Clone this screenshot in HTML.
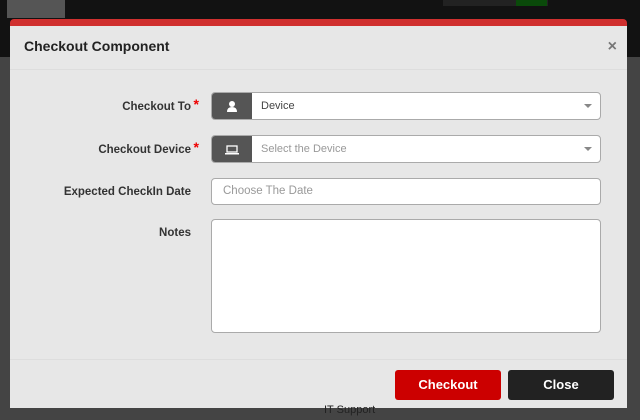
<!DOCTYPE html>
<html><head><style>
body{margin:0;width:640px;height:420px;overflow:hidden;background:#444;font-family:"Liberation Sans",sans-serif;position:relative}
.top{position:absolute;left:0;top:0;width:640px;height:57px;background:#121212}
.tb1{position:absolute;left:7px;top:0;width:58px;height:18px;background:#555}
.tb2{position:absolute;left:443px;top:0;width:105px;height:6px;background:#222}
.tb3{position:absolute;left:516px;top:0;width:31px;height:6px;background:#0a4a0a}
.modal{position:absolute;left:10px;top:19px;width:617px;height:389px;background:#e7e7e7;border-top:7px solid #d0302f;border-radius:4px 4px 0 0;box-sizing:border-box}
.hdr{height:43px;border-bottom:1px solid #ddd;position:relative}
.hdr h3{margin:0;position:absolute;left:14px;top:12px;font-size:14px;font-weight:bold;color:#222}
.x{position:absolute;right:10px;top:12px;font-size:16px;color:#777;font-weight:bold}
.lbl{position:absolute;right:436px;font-size:11.5px;font-weight:bold;color:#333;text-align:right}
.lbl i{color:#e00;font-style:normal;font-size:14px;position:absolute;right:-8px;top:-5px}
.sel{position:absolute;left:201px;width:390px;height:28px;background:#fff;border:1px solid #aaa;border-radius:4px;box-sizing:border-box;overflow:hidden}
.ic{position:absolute;left:0;top:0;width:40px;height:100%;background:#555}
.sel span{position:absolute;left:49px;top:7px;font-size:11px}
.car{position:absolute;right:8px;top:11px;border:4px solid transparent;border-top-color:#888;border-bottom:0}
.inp{position:absolute;left:201px;width:390px;background:#fff;border:1px solid #aaa;border-radius:4px;box-sizing:border-box}
.btn{position:absolute;top:344px;width:106px;height:30px;border-radius:3px;color:#fff;font-size:13px;font-weight:bold;text-align:center;line-height:30px}
</style></head><body>
<div class="top"><div class="tb1"></div><div class="tb2"></div><div class="tb3"></div></div>
<div class="modal">
<div class="hdr"><h3>Checkout Component</h3><div class="x">×</div></div>
<div class="lbl" style="top:75px">Checkout To<i>*</i></div>
<div class="sel" style="top:66px"><div class="ic"><svg width="40" height="28"><circle cx="20" cy="11" r="3" fill="#fff"/><path d="M15 19 Q15 14 20 14 Q25 14 25 19Z" fill="#fff"/></svg></div><span style="color:#444">Device</span><div class="car"></div></div>
<div class="lbl" style="top:118px">Checkout Device<i>*</i></div>
<div class="sel" style="top:109px"><div class="ic"><svg width="40" height="28"><rect x="15" y="10" width="10" height="6" fill="none" stroke="#fff" stroke-width="1.3"/><rect x="13" y="17" width="14" height="1.5" fill="#fff"/></svg></div><span style="color:#999">Select the Device</span><div class="car"></div></div>
<div class="lbl" style="top:160px">Expected CheckIn Date</div>
<div class="inp" style="top:152px;height:27px"><span style="position:absolute;left:11px;top:6px;font-size:11.5px;color:#999">Choose The Date</span></div>
<div class="lbl" style="top:201px">Notes</div>
<div class="inp" style="top:193px;height:114px"></div>
<div style="position:absolute;left:0;top:333px;width:100%;border-top:1px solid #ddd"></div>
<div class="btn" style="left:385px;background:#cc0000">Checkout</div>
<div class="btn" style="left:498px;background:#222">Close</div>
</div>
<div style="position:absolute;left:324px;top:404px;font-size:11px;color:#222">IT Support</div>
</body></html>
